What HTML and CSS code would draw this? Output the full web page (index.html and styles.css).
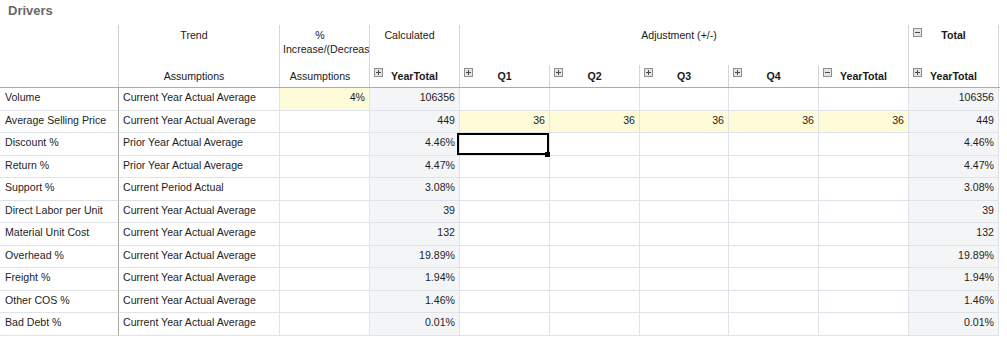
FILE: index.html
```html
<!DOCTYPE html>
<html>
<head>
<meta charset="utf-8">
<link rel="stylesheet" href="styles.css">
</head>
<body>
<div class="title">Drivers</div>
<div class="head">
  <div class="hc h-blank"></div>
  <div class="hc h-c2 r1 txt">Trend</div>
  <div class="hc h-c2 r2 txt">Assumptions</div>
  <div class="hc h-c3 r1 txt pct">%<br>Increase/(Decrease)</div>
  <div class="hc h-c3 r2 txt pct">Assumptions</div>
  <div class="hc h-c4 r1 txt">Calculated</div>
  <div class="hc h-c4 r2 ico"><svg class="tg" viewBox="0 0 9 9"><rect x=".5" y=".5" width="8" height="8"/><path d="M2 4.5h5M4.5 2v5"/></svg><b>YearTotal</b><i></i></div>
  <div class="hc h-adj r1 txt">Adjustment (+/-)</div>
  <div class="hc h-c5 r2 ico"><svg class="tg" viewBox="0 0 9 9"><rect x=".5" y=".5" width="8" height="8"/><path d="M2 4.5h5M4.5 2v5"/></svg><b>Q1</b><i></i></div>
  <div class="hc h-c6 r2 ico"><svg class="tg" viewBox="0 0 9 9"><rect x=".5" y=".5" width="8" height="8"/><path d="M2 4.5h5M4.5 2v5"/></svg><b>Q2</b><i></i></div>
  <div class="hc h-c7 r2 ico"><svg class="tg" viewBox="0 0 9 9"><rect x=".5" y=".5" width="8" height="8"/><path d="M2 4.5h5M4.5 2v5"/></svg><b>Q3</b><i></i></div>
  <div class="hc h-c8 r2 ico"><svg class="tg" viewBox="0 0 9 9"><rect x=".5" y=".5" width="8" height="8"/><path d="M2 4.5h5M4.5 2v5"/></svg><b>Q4</b><i></i></div>
  <div class="hc h-c9 r2 ico"><svg class="tg" viewBox="0 0 9 9"><rect x=".5" y=".5" width="8" height="8"/><path d="M2 4.5h5"/></svg><b>YearTotal</b><i></i></div>
  <div class="hc h-c10 r1 ico"><svg class="tg" viewBox="0 0 9 9"><rect x=".5" y=".5" width="8" height="8"/><path d="M2 4.5h5"/></svg><b>Total</b><i></i></div>
  <div class="hc h-c10 r2 ico"><svg class="tg" viewBox="0 0 9 9"><rect x=".5" y=".5" width="8" height="8"/><path d="M2 4.5h5M4.5 2v5"/></svg><b>YearTotal</b><i></i></div>
</div>
<div class="body">
  <div class="row">
    <div class="c lbl">Volume</div><div class="c trd">Current Year Actual Average</div><div class="c n yel">4%</div><div class="c n gry">106356</div>
    <div class="c n"></div><div class="c n"></div><div class="c n"></div><div class="c n"></div><div class="c n"></div><div class="c n gry">106356</div>
  </div>
  <div class="row">
    <div class="c lbl">Average Selling Price</div><div class="c trd">Current Year Actual Average</div><div class="c n"></div><div class="c n gry">449</div>
    <div class="c n yel">36</div><div class="c n yel">36</div><div class="c n yel">36</div><div class="c n yel">36</div><div class="c n yel">36</div><div class="c n gry">449</div>
  </div>
  <div class="row">
    <div class="c lbl">Discount %</div><div class="c trd">Prior Year Actual Average</div><div class="c n"></div><div class="c n gry">4.46%</div>
    <div class="c n sel-cell"><span class="sel"><span class="handle"></span></span></div><div class="c n"></div><div class="c n"></div><div class="c n"></div><div class="c n"></div><div class="c n gry">4.46%</div>
  </div>
  <div class="row">
    <div class="c lbl">Return %</div><div class="c trd">Prior Year Actual Average</div><div class="c n"></div><div class="c n gry">4.47%</div>
    <div class="c n"></div><div class="c n"></div><div class="c n"></div><div class="c n"></div><div class="c n"></div><div class="c n gry">4.47%</div>
  </div>
  <div class="row">
    <div class="c lbl">Support %</div><div class="c trd">Current Period Actual</div><div class="c n"></div><div class="c n gry">3.08%</div>
    <div class="c n"></div><div class="c n"></div><div class="c n"></div><div class="c n"></div><div class="c n"></div><div class="c n gry">3.08%</div>
  </div>
  <div class="row">
    <div class="c lbl">Direct Labor per Unit</div><div class="c trd">Current Year Actual Average</div><div class="c n"></div><div class="c n gry">39</div>
    <div class="c n"></div><div class="c n"></div><div class="c n"></div><div class="c n"></div><div class="c n"></div><div class="c n gry">39</div>
  </div>
  <div class="row">
    <div class="c lbl">Material Unit Cost</div><div class="c trd">Current Year Actual Average</div><div class="c n"></div><div class="c n gry">132</div>
    <div class="c n"></div><div class="c n"></div><div class="c n"></div><div class="c n"></div><div class="c n"></div><div class="c n gry">132</div>
  </div>
  <div class="row">
    <div class="c lbl">Overhead %</div><div class="c trd">Current Year Actual Average</div><div class="c n"></div><div class="c n gry">19.89%</div>
    <div class="c n"></div><div class="c n"></div><div class="c n"></div><div class="c n"></div><div class="c n"></div><div class="c n gry">19.89%</div>
  </div>
  <div class="row">
    <div class="c lbl">Freight %</div><div class="c trd">Current Year Actual Average</div><div class="c n"></div><div class="c n gry">1.94%</div>
    <div class="c n"></div><div class="c n"></div><div class="c n"></div><div class="c n"></div><div class="c n"></div><div class="c n gry">1.94%</div>
  </div>
  <div class="row">
    <div class="c lbl">Other COS %</div><div class="c trd">Current Year Actual Average</div><div class="c n"></div><div class="c n gry">1.46%</div>
    <div class="c n"></div><div class="c n"></div><div class="c n"></div><div class="c n"></div><div class="c n"></div><div class="c n gry">1.46%</div>
  </div>
  <div class="row">
    <div class="c lbl">Bad Debt %</div><div class="c trd">Current Year Actual Average</div><div class="c n"></div><div class="c n gry">0.01%</div>
    <div class="c n"></div><div class="c n"></div><div class="c n"></div><div class="c n"></div><div class="c n"></div><div class="c n gry">0.01%</div>
  </div>
</div>
</body>
</html>
```

FILE: styles.css
```css
html, body {
  margin: 0;
  padding: 0;
  background: #fff;
}
body {
  font-family: "Liberation Sans", Arial, sans-serif;
  font-size: 10.6px;
  color: #1e1e1e;
  width: 1007px;
}
.title {
  height: 25px;
  box-sizing: border-box;
  padding: 3px 0 0 8px;
  font-size: 13px;
  line-height: 16px;
  font-weight: bold;
  color: #6a6a6a;
}
.head, .body {
  display: grid;
  grid-template-columns: 119px 161px 90px 90px 90px 90px 89px 90px 90px 90px;
  width: 999px;
}
.head {
  grid-template-rows: 40px 22px;
  border-bottom: 1px solid #ababab;
  width: 1000px;
  grid-template-columns: 119px 161px 90px 90px 90px 90px 89px 90px 90px 90px 1px;
}
.hc {
  border-right: 1px solid #d6d6d6;
  line-height: 14px;
  white-space: nowrap;
  overflow: hidden;
  color: #1a1a1a;
}
.r1 { grid-row: 1; padding-top: 3px; }
.r2 { grid-row: 2; padding-top: 4px; }
.h-blank { grid-column: 1; grid-row: 1 / 3; border-right-color: #cfcfcf; }
.h-c2 { grid-column: 2; }
.h-c3 { grid-column: 3; }
.h-c4 { grid-column: 4; }
.h-adj { grid-column: 5 / 10; }
.h-c5 { grid-column: 5; }
.h-c6 { grid-column: 6; }
.h-c7 { grid-column: 7; }
.h-c8 { grid-column: 8; }
.h-c9 { grid-column: 9; }
.h-c10 { grid-column: 10; }
.txt {
  text-align: center;
  padding-right: 10px;
}
.txt.pct {
  padding-left: 3px;
  padding-right: 12px;
}
.ico {
  display: grid;
  grid-template-columns: 13px 1fr 13px;
  align-items: start;
}
.ico b {
  text-align: center;
  font-weight: bold;
}
.r1.ico { padding-top: 0; }
.r1.ico b { padding-top: 3px; }
.r2.ico { padding-top: 0; }
.r2.ico b { padding-top: 4px; }
.tg {
  width: 9px;
  height: 9px;
  margin: 3px 0 0 4px;
  display: block;
}
.tg rect {
  fill: #e4e4e4;
  stroke: #8e8e8e;
  stroke-width: 1;
}
.tg path {
  stroke: #4a4a4a;
  stroke-width: 1;
  fill: none;
}
.body {
  grid-auto-rows: 22.5px;
}
.row { display: contents; }
.c {
  border-right: 1px solid #dfe3e9;
  border-bottom: 1px solid #dfe3e9;
  padding: 2px 4px 0 4px;
  line-height: 14px;
  white-space: nowrap;
  overflow: hidden;
  min-width: 0;
}
.lbl {
  padding-left: 5px;
  border-right-color: #aaa69f;
}
.n { text-align: right; }
.yel { background: #fefbd8; }
.gry { background: #f4f5f7; }
.sel-cell {
  position: relative;
  overflow: visible;
}
.sel {
  position: absolute;
  left: -3px;
  top: 0;
  right: 0;
  bottom: 0;
  border: 2px solid #000;
  z-index: 2;
}
.handle {
  position: absolute;
  right: -3px;
  bottom: -4px;
  width: 5px;
  height: 5px;
  background: #000;
}
```
